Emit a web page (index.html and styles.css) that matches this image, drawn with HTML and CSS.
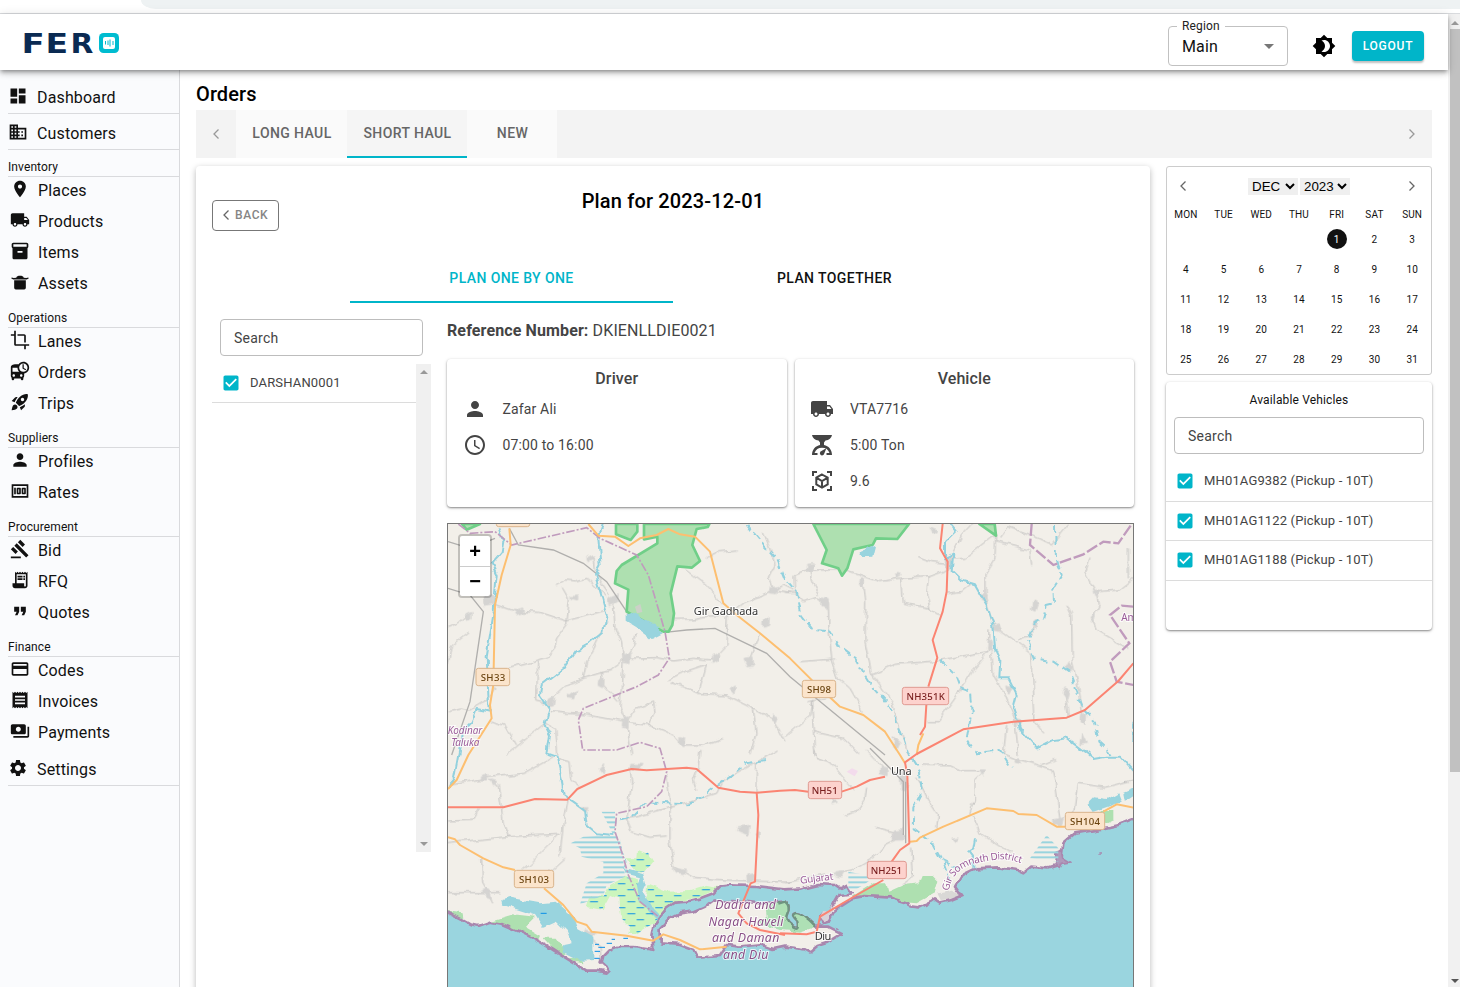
FILE: index.html
```html
<!DOCTYPE html>
<html lang="en">
<head>
<meta charset="utf-8">
<title>Fero - Orders</title>
<link rel="stylesheet" href="styles.css">
</head>
<body>
<svg class="defs" width="0" height="0">
  <symbol id="i-dash" viewBox="0 0 24 24"><path d="M3 13h8V3H3v10zm0 8h8v-6H3v6zm10 0h8V11h-8v10zm0-18v6h8V3h-8z"/></symbol>
  <symbol id="i-domain" viewBox="0 0 24 24"><path d="M12 7V3H2v18h20V7H12zM6 19H4v-2h2v2zm0-4H4v-2h2v2zm0-4H4V9h2v2zm0-4H4V5h2v2zm4 12H8v-2h2v2zm0-4H8v-2h2v2zm0-4H8V9h2v2zm0-4H8V5h2v2zm10 12h-8v-2h2v-2h-2v-2h2v-2h-2V9h8v10zm-2-8h-2v2h2v-2zm0 4h-2v2h2v-2z"/></symbol>
  <symbol id="i-place" viewBox="0 0 24 24"><path d="M12 2C8.13 2 5 5.13 5 9c0 5.25 7 13 7 13s7-7.75 7-13c0-3.87-3.13-7-7-7zm0 9.500c-1.380 0-2.500-1.120-2.500-2.500s1.120-2.500 2.500-2.500 2.500 1.120 2.500 2.500-1.120 2.500-2.500 2.500z"/></symbol>
  <symbol id="i-truck" viewBox="0 0 24 24"><path d="M20 8h-3V4H3c-1.100 0-2 .9-2 2v11h2c0 1.660 1.340 3 3 3s3-1.340 3-3h6c0 1.660 1.340 3 3 3s3-1.340 3-3h2v-5l-3-4zM6 18.500c-.83 0-1.500-.67-1.500-1.500s.67-1.500 1.500-1.500 1.500.67 1.500 1.500-.67 1.500-1.500 1.500zm13.500-9l1.960 2.500H17V9.500h2.500zm-1.500 9c-.83 0-1.500-.67-1.500-1.500s.67-1.500 1.500-1.500 1.500.67 1.500 1.500-.67 1.500-1.500 1.500z"/></symbol>
  <symbol id="i-box" viewBox="0 0 24 24"><path d="M20 2H4c-1 0-2 .9-2 2v3.010c0 .72.43 1.340 1 1.690V20c0 1.100 1.100 2 2 2h14c.9 0 2-.9 2-2V8.700c.57-.35 1-.97 1-1.690V4c0-1.100-1-2-2-2zm-5 12H9v-2h6v2zm5-7H4V4h16v3z"/></symbol>
  <symbol id="i-pot" viewBox="0 0 24 24"><path d="M5 10h14v9a2 2 0 0 1-2 2H7a2 2 0 0 1-2-2zM2 6.500l2.500 0.800 3-0.300C8 5.200 9.500 4.500 12 4.500s4 .7 4.500 2.500l3 .3 2.500-.8.400 1.300L20 9H4L1.600 7.800z"/></symbol>
  <symbol id="i-crop" viewBox="0 0 24 24"><path d="M17 15h2V7c0-1.100-.9-2-2-2H9v2h8v8zM7 17V1H5v4H1v2h4v10c0 1.100.9 2 2 2h10v4h2v-4h4v-2H7z"/></symbol>
  <symbol id="i-bus" viewBox="0 0 24 24"><path d="M16 1c-2.400 0-4.520 1.210-5.780 3.050.01-.01.01-.02.02-.03C9.840 4 9.420 4 9 4c-4.420 0-8 .5-8 4v10c0 .88.39 1.670 1 2.220V22c0 .55.45 1 1 1h1c.55 0 1-.45 1-1v-1h8v1c0 .55.45 1 1 1h1c.55 0 1-.45 1-1v-1.780c.61-.55 1-1.340 1-2.220v-3.080c3.390-.49 6-3.390 6-6.920 0-3.870-3.130-7-7-7zM4.500 19c-.83 0-1.500-.67-1.500-1.500S3.670 16 4.500 16s1.500.67 1.500 1.500S5.330 19 4.500 19zM3 13V8h6c0 1.960.81 3.730 2.110 5H3zm10.500 6c-.83 0-1.500-.67-1.500-1.500s.67-1.500 1.500-1.500 1.500.67 1.500 1.500-.67 1.500-1.500 1.500zm2.500-6c-2.760 0-5-2.240-5-5s2.240-5 5-5 5 2.240 5 5-2.240 5-5 5zm.5-9H15v5l3.620 2.160.75-1.230-2.870-1.680V4z"/></symbol>
  <symbol id="i-rocket" viewBox="0 0 24 24"><path d="M9.190 6.350c-2.040 2.290-3.440 5.580-3.570 5.890L2 10.690l4.050-4.050c.47-.47 1.150-.68 1.810-.55l1.330.26zM11.170 17s3.740-1.550 5.890-3.700c5.400-5.400 4.500-9.620 4.210-10.570-.95-.3-5.170-1.190-10.570 4.210C8.550 9.090 7 12.830 7 12.830L11.170 17zm6.480-2.190c-2.290 2.040-5.580 3.440-5.890 3.570L13.310 22l4.050-4.050c.47-.47.68-1.150.55-1.810l-.26-1.330zM9 18c0 .83-.34 1.580-.88 2.120C6.940 21.300 2 22 2 22s.7-4.940 1.880-6.120C4.420 15.340 5.170 15 6 15c1.660 0 3 1.340 3 3zm4-9c0-1.100.9-2 2-2s2 .9 2 2-.9 2-2 2-2-.9-2-2z"/></symbol>
  <symbol id="i-person" viewBox="0 0 24 24"><path d="M12 12c2.210 0 4-1.790 4-4s-1.790-4-4-4-4 1.790-4 4 1.790 4 4 4zm0 2c-2.670 0-8 1.340-8 4v2h16v-2c0-2.660-5.330-4-8-4z"/></symbol>
  <symbol id="i-money" viewBox="0 0 24 24"><path fill-rule="evenodd" d="M5 8h2v8H5zM9 8h3a1 1 0 0 1 1 1v6a1 1 0 0 1-1 1H9a1 1 0 0 1-1-1V9a1 1 0 0 1 1-1zm1 2v4h1v-4zM15 8h3a1 1 0 0 1 1 1v6a1 1 0 0 1-1 1h-3a1 1 0 0 1-1-1V9a1 1 0 0 1 1-1zm1 2v4h1v-4zM2 4v16h20V4H2zm2 14V6h16v12H4z"/></symbol>
  <symbol id="i-gavel" viewBox="0 0 24 24"><path d="M1 21h12v2H1v-2zM5.240 8.070l2.830-2.830 14.140 14.140-2.830 2.830L5.240 8.070zM12.320 1l5.660 5.660-2.830 2.830-5.660-5.660L12.320 1zM3.830 9.480l5.660 5.660-2.830 2.830L1 12.310l2.830-2.830z"/></symbol>
  <symbol id="i-rfq" viewBox="0 0 24 24"><path d="M19.500 3.500L18 2l-1.500 1.500L15 2l-1.500 1.500L12 2l-1.500 1.500L9 2 7.500 3.500 6 2v14H3v3c0 1.660 1.340 3 3 3h12c1.660 0 3-1.340 3-3V2l-1.500 1.500zM19 19c0 .55-.45 1-1 1s-1-.45-1-1v-3H8V5h11v14zM9 7h6v2H9zM16 7h2v2h-2zM9 10h6v2H9zM16 10h2v2h-2z"/></symbol>
  <symbol id="i-quote" viewBox="0 0 24 24"><path d="M6 17h3l2-4V7H5v6h3zm8 0h3l2-4V7h-6v6h3z"/></symbol>
  <symbol id="i-card" viewBox="0 0 24 24"><path d="M20 4H4c-1.110 0-1.990.89-1.990 2L2 18c0 1.110.89 2 2 2h16c1.110 0 2-.89 2-2V6c0-1.110-.89-2-2-2zm0 14H4v-6h16v6zm0-10H4V6h16v2z"/></symbol>
  <symbol id="i-receipt" viewBox="0 0 24 24"><path d="M18 17H6v-2h12v2zm0-4H6v-2h12v2zm0-4H6V7h12v2zM3 22l1.500-1.500L6 22l1.500-1.500L9 22l1.500-1.500L12 22l1.500-1.500L15 22l1.500-1.500L18 22l1.500-1.500L21 22V2l-1.500 1.500L18 2l-1.500 1.500L15 2l-1.500 1.500L12 2l-1.500 1.500L9 2 7.500 3.500 6 2 4.500 3.500 3 2v20z"/></symbol>
  <symbol id="i-pay" viewBox="0 0 24 24"><path d="M19 14V6c0-1.100-.9-2-2-2H3c-1.100 0-2 .9-2 2v8c0 1.100.9 2 2 2h14c1.100 0 2-.9 2-2zm-9-1c-1.660 0-3-1.340-3-3s1.340-3 3-3 3 1.340 3 3-1.340 3-3 3zm13-6v11c0 1.100-.9 2-2 2H4v-2h17V7h2z"/></symbol>
  <symbol id="i-gear" viewBox="0 0 24 24"><path d="M19.140 12.940c.04-.3.06-.61.06-.94 0-.32-.02-.64-.07-.94l2.030-1.580c.18-.14.23-.41.12-.61l-1.920-3.320c-.12-.22-.37-.29-.59-.22l-2.390.96c-.5-.38-1.030-.7-1.620-.94l-.36-2.540c-.04-.24-.24-.41-.48-.41h-3.840c-.24 0-.43.17-.47.41l-.36 2.540c-.59.24-1.130.57-1.620.94l-2.390-.96c-.22-.08-.47 0-.59.22L2.740 8.870c-.12.21-.08.47.12.61l2.030 1.580c-.05.3-.09.63-.09.94s.02.64.07.94l-2.030 1.580c-.18.14-.23.41-.12.61l1.920 3.320c.12.22.37.29.59.22l2.390-.96c.5.38 1.030.7 1.620.94l.36 2.540c.05.24.24.41.48.41h3.840c.24 0 .44-.17.47-.41l.36-2.540c.59-.24 1.130-.56 1.620-.94l2.390.96c.22.08.47 0 .59-.22l1.920-3.320c.12-.22.07-.47-.12-.61l-2.010-1.580zM12 15.600c-1.980 0-3.600-1.620-3.600-3.600s1.620-3.600 3.600-3.600 3.600 1.620 3.600 3.600-1.620 3.600-3.600 3.600z"/></symbol>
  <symbol id="i-theme" viewBox="0 0 24 24"><path d="M20 8.690V4h-4.690L12 .69 8.690 4H4v4.690L.69 12 4 15.310V20h4.690L12 23.310 15.310 20H20v-4.690L23.310 12 20 8.690zM12 18c-.89 0-1.740-.2-2.500-.55C11.560 16.500 13 14.420 13 12s-1.440-4.500-3.500-5.450C10.260 6.200 11.110 6 12 6c3.310 0 6 2.690 6 6s-2.690 6-6 6z"/></symbol>
  <symbol id="i-clock" viewBox="0 0 24 24"><path d="M11.990 2C6.470 2 2 6.480 2 12s4.470 10 9.990 10C17.520 22 22 17.520 22 12S17.520 2 11.990 2zM12 20c-4.420 0-8-3.580-8-8s3.580-8 8-8 8 3.580 8 8-3.580 8-8 8zm.5-13H11v6l5.250 3.150.75-1.230-4.500-2.670z"/></symbol>
  <symbol id="i-scale" viewBox="0 0 24 24"><path fill-rule="evenodd" d="M2 2h20c-.4 3-3 5-6.500 5.600L14 9.500v2.600C18.500 12.900 22 16.800 22 22h-5.500v-2h3a8 8 0 0 0-15 0h3v2H2c0-5.200 3.500-9.100 8-9.900V9.500L8.500 7.600C5 7 2.400 5 2 2zM16.500 15l-2.300 5.800a2.200 2.200 0 1 1-2.700-2.700z"/></symbol>
  <symbol id="i-cube" viewBox="0 0 24 24"><path fill="none" stroke="currentColor" stroke-width="2" d="M3 7V3h4M17 3h4v4M21 17v4h-4M7 21H3v-4M12 5.500l5.700 3.200v6.600L12 18.500l-5.700-3.200V8.700zM6.300 8.700l5.700 3.300 5.700-3.300M12 12v6.500"/></symbol>
  <symbol id="i-check" viewBox="0 0 24 24"><path d="M19 3H5c-1.110 0-2 .9-2 2v14c0 1.100.89 2 2 2h14c1.110 0 2-.9 2-2V5c0-1.100-.89-2-2-2zm-9 14l-5-5 1.410-1.410L10 14.170l7.590-7.590L19 8l-9 9z"/></symbol>
  <symbol id="i-left" viewBox="0 0 12 12"><path fill="none" stroke="currentColor" stroke-width="1.300" d="M8.500 1.500L4 6l4.500 4.500"/></symbol>
  <symbol id="i-right" viewBox="0 0 12 12"><path fill="none" stroke="currentColor" stroke-width="1.300" d="M3.500 1.500L8 6l-4.500 4.500"/></symbol>
  <symbol id="i-down" viewBox="0 0 10 8"><path fill="none" stroke="currentColor" stroke-width="2" d="M1 2l4 4 4-4"/></symbol>
</svg>

<div class="browser"><div class="omnibox"></div></div>
<div class="app">
  <div class="page">
    <header class="header">
      <svg class="logo" width="100" height="26" viewBox="0 0 100 26"><text class="logo-text" x="0" y="22.500" transform="translate(-.5 0) scale(1.280 1)">F</text><text class="logo-text" x="0" y="22.500" transform="translate(23.500 0) scale(1.250 1)">E</text><text class="logo-text" x="0" y="22.500" transform="translate(48.500 0) scale(1.120 1)">R</text><rect x="77" y="3" width="20" height="20" rx="4.500" fill="#00bcd0"/><rect x="81" y="7" width="12" height="12" rx="2" fill="#fff"/><path d="M83.500 11v3.500M86 10.500v4.500M88 9.500v7M91 11v4" stroke="#00bcd0" stroke-width="1"/></svg>
      <div class="actions">
        <div class="region"><span class="region-label">Region</span><span>Main</span><i class="caret"></i></div>
        <svg class="ic24 theme"><use href="#i-theme"/></svg>
        <div class="logout">LOGOUT</div>
      </div>
    </header>
    <div class="body">
      <nav class="sidebar">
        <div class="top-item"><svg><use href="#i-dash"/></svg>Dashboard</div>
        <div class="top-item"><svg><use href="#i-domain"/></svg>Customers</div>
        <div class="group">Inventory</div>
        <div class="item"><svg><use href="#i-place"/></svg>Places</div>
        <div class="item"><svg><use href="#i-truck"/></svg>Products</div>
        <div class="item"><svg><use href="#i-box"/></svg>Items</div>
        <div class="item"><svg><use href="#i-pot"/></svg>Assets</div>
        <div class="group">Operations</div>
        <div class="item"><svg><use href="#i-crop"/></svg>Lanes</div>
        <div class="item"><svg><use href="#i-bus"/></svg>Orders</div>
        <div class="item"><svg><use href="#i-rocket"/></svg>Trips</div>
        <div class="group">Suppliers</div>
        <div class="item"><svg><use href="#i-person"/></svg>Profiles</div>
        <div class="item"><svg><use href="#i-money"/></svg>Rates</div>
        <div class="group">Procurement</div>
        <div class="item"><svg><use href="#i-gavel"/></svg>Bid</div>
        <div class="item"><svg><use href="#i-rfq"/></svg>RFQ</div>
        <div class="item"><svg><use href="#i-quote"/></svg>Quotes</div>
        <div class="group">Finance</div>
        <div class="item"><svg><use href="#i-card"/></svg>Codes</div>
        <div class="item"><svg><use href="#i-receipt"/></svg>Invoices</div>
        <div class="item"><svg><use href="#i-pay"/></svg>Payments</div>
        <div class="top-item"><svg><use href="#i-gear"/></svg>Settings</div>
      </nav>
      <main class="main">
        <h1>Orders</h1>
        <div class="tabs">
          <div class="tab-arrow"><svg class="ic12"><use href="#i-left"/></svg></div>
          <div class="tab long">LONG HAUL</div><div class="tab short active">SHORT HAUL</div><div class="tab new">NEW</div>
          <div class="tab-arrow end"><svg class="ic12"><use href="#i-right"/></svg></div>
        </div>
        <div class="columns">
          <section class="plan">
            <div class="back"><svg class="ic12 dark"><use href="#i-left"/></svg>BACK</div>
            <h2>Plan for 2023-12-01</h2>
            <div class="modes"><div class="mode on">PLAN ONE BY ONE</div><div class="mode">PLAN TOGETHER</div></div>
            <div class="split">
              <div class="orders">
                <div class="search">Search</div>
                <div class="list">
                  <div class="rows"><div class="order"><svg><use href="#i-check"/></svg>DARSHAN0001</div></div>
                  <div class="list-bar"><i class="up"></i><i class="dn"></i></div>
                </div>
              </div>
              <div class="detail">
                <p class="ref"><b>Reference Number:</b> DKIENLLDIE0021</p>
                <div class="cards">
                  <div class="card"><h3>Driver</h3>
                    <div class="fact"><svg class="ic24"><use href="#i-person"/></svg>Zafar Ali</div>
                    <div class="fact"><svg class="ic24"><use href="#i-clock"/></svg>07:00 to 16:00</div></div>
                  <div class="card"><h3>Vehicle</h3>
                    <div class="fact"><svg class="ic24"><use href="#i-truck"/></svg>VTA7716</div>
                    <div class="fact"><svg class="ic24"><use href="#i-scale"/></svg>5:00 Ton</div>
                    <div class="fact"><svg class="ic24"><use href="#i-cube"/></svg>9.6</div></div>
                </div>
                <div class="map">
<svg class="map-svg" viewBox="24 27 2055 1389">
  <defs>
    <filter id="wobble" filterUnits="userSpaceOnUse" x="0" y="0" width="2100" height="1430" color-interpolation-filters="sRGB"><feTurbulence type="fractalNoise" baseFrequency=".03" numOctaves="2" seed="4"/><feDisplacementMap in="SourceGraphic" scale="20" xChannelSelector="R" yChannelSelector="G"/></filter>
    <pattern id="hatch" width="30" height="15" patternUnits="userSpaceOnUse"><path d="M0 7h30" stroke="#99d4de" stroke-width="6"/></pattern>
    <pattern id="marsh" width="56" height="36" patternUnits="userSpaceOnUse"><path d="M2 8h24M30 26h22" stroke="#0a8fe6" stroke-width="3"/></pattern>
    <path id="gsd" d="M1527 1128C1532 1085 1560 1052 1620 1042S1690 1026 1746 1046"/>
  </defs>
  <g filter="url(#wobble)">
  <!-- minor roads -->
  <g class="minor">
    <path d="M24 335L60 320 85 300M148 262L230 290 300 292 380 318 430 305 500 285M348 212L375 195 410 198 440 190 500 245M370 218L388 250 380 330 350 370 345 400 325 425 293 435 205 458M293 435L290 558 320 565M24 590L60 582 85 588 148 550 165 520M462 130L468 180 510 240M520 262L525 340 545 380 550 430 540 580 560 625 575 720M320 565L380 510 430 490 510 466 555 430 580 390 585 355M555 430L650 428 700 438 760 430 815 435M487 470L490 510 535 560M430 490L440 440 462 400 500 320M333 590L440 600 560 622 630 632 700 660 725 690 790 690 848 670M560 622L590 580 640 560 645 590 628 632M680 495L720 475 800 448 775 535 690 500M775 535L860 540 930 575 1000 615 1035 680M940 580L948 650 930 720M560 295L690 303M700 313L760 312 790 305 862 300 858 390 830 420M862 300L915 262 1000 225 1050 232M740 165L800 210 850 270M1000 225L985 190 1005 150 990 100 970 50M800 130L840 110 890 105M958 355L930 430M1000 225L1030 210 1060 225M150 618L195 630 230 690M200 720L320 620 345 650 350 720M24 450L35 390 85 350"/>
  </g>
  <g class="minor" transform="translate(1035 0)">
    <path d="M30 180L75 165 180 165 285 200 340 190 430 185 485 165M30 180L32 232 0 232M30 232L55 260 100 248 130 262 132 340 140 430 160 490 195 520 235 590M75 165L80 200 100 240M235 190L242 260 240 380 260 480 320 560 370 720M350 190L355 265 430 278 465 300M430 185L425 240 435 280M400 125L440 140 485 145M560 27L530 60 505 110M485 235L530 230 560 205M632 60L630 130 600 180 600 240 620 320 650 350 740 415 750 620 780 655M632 60L540 130 485 133M645 70L670 35 740 60 800 90 850 27M632 80L735 105 740 150M700 375L740 360 748 325M45 440L150 432M260 480L330 448 450 438 610 410M612 340L610 410 560 470 510 550 460 620 425 620M620 410L625 480 660 540 690 610 700 720M845 270L860 300 862 440 885 540 893 600M915 128L902 170 935 230 1000 225 1045 190M935 230L940 270 920 310 935 345 1030 400M850 600L840 530M80 555L75 600 0 665M80 555L85 650 175 670 225 720M65 560L120 550M85 650L90 720M665 630L655 720M1030 100L1030 190"/>
  </g>
  <g class="minor" transform="translate(0 705)">
    <path d="M24 103L130 87 160 80 250 70 340 20M150 90L175 105 190 220 205 260 360 253M24 278L205 260M355 253L270 340 245 360M375 325L325 370M24 210L100 208 118 175M125 325L128 400 145 430 155 460M24 428L180 428M385 150L370 220 360 320M350 25L390 35 395 90 420 110M570 50L575 100 560 210 575 245 630 262 680 258M680 70L690 160 690 270 700 350 760 382 850 390 1050 397M555 210L690 172 830 130 850 90 950 35 1010 0M950 35L948 130M780 0L775 50 760 90 770 120M440 555L480 590 485 640"/>
  </g>
  <g class="minor" transform="translate(1035 705)">
    <path d="M90 0L95 25 140 40 205 120M245 110L240 150 215 185 180 195M270 232L360 255M395 80L430 150 460 195 455 235M410 45L500 48 530 62 600 62 570 90 568 150 550 200M565 200L580 245 650 290 680 310M360 255L300 285 285 310 200 360 0 398M380 290L385 380 350 405M650 10L700 30 800 60 810 95 825 210 870 180 880 100 960 112 1045 90M770 45L810 28M240 0L290 50"/>
  </g>
  <!-- settlements -->
  <g class="town">
    <path d="M130 248l30-4-2 26-26 4zM225 285l20-6 4 14-20 6zM80 300l16-8v20l-16 4zM440 130l18-8 4 12-18 6zM395 245l18-2v12l-16-4zM505 250l30-14-2 24-26 12zM548 420l24-8-2 34-20-4zM478 500l14-8-2 26-12-6zM380 548l30-22-6 26zM325 555l16-6-4 24-14 2zM552 612l12-4v28l-14-2zM815 425l24-8-2 20-24 8zM912 430l24-4 2 30-14 2zM968 325l20-20-2 26-16 6zM990 218l24-4-4 22-22-2zM870 520l16-10-4 24zM720 665l14 4-2 26-14-6zM1000 600l16 6-8 20-16-12zM1100 145l22-2-8 24-16 0zM1145 245l20 6-2 30-18-10zM1260 185l14 12-4 14-14-8zM1370 175l14 4-12 8zM1470 40l20 8-12 10zM1515 125l24-4-6 40-12 4zM1660 335l14-6 6 20-18-4zM1645 380l12-2v28l-14-4zM1625 235l14 4-6 20-10-6zM1780 255l16 10-8 24-14-8zM1775 330l14-12-4 26zM1962 225l12 6-6 12zM1950 310l12-12-4 26zM1885 440l14 22-12 10-12-14zM1875 515l12 10-6 24-12-14zM1925 600l12-4-2 30-12-8zM1925 655l14 30-20 4zM1360 665l20 20-8 20-14-10zM1730 615l14 2-6 14-12-4zM1700 510l18 6-12 22zM1380 775l24 0-6 50-14-4zM1320 755l24 4v20l-24-6z"/>
    <path d="M125 785l22-6-4 16-20 0zM155 795l14 4-6 14zM480 760l14-14-4 28zM575 745l34 0-8 14-26 0zM420 875l24 0-6 16zM895 935l36-4-4 30-34-14zM945 955l12-6v20zM700 1060l40 6-14 10-22-6zM920 1080l26-4-2 22-22 0zM130 1125l16 0 4 24-12-4zM435 1245l30 6-14 14-20-4zM1185 1070l30-4-12 20-18-4zM1360 945l30-4v34h-30zM1535 970l22-4-12 14zM1840 915l30-6-6 24-20-4zM1725 735l12-4 8 18-20-4zM1620 765l16 0-6 18zM1185 855l10 10-16 4z"/>
  </g>
  </g>
  <g class="rail">
    <path d="M24 80L90 100 165 70M208 40L235 90 340 105 430 145 500 200 560 290 675 352 740 345 825 340 980 415 1050 485 1335 720M24 220L90 240 130 290 90 560 35 720M1290 700L1390 800V960M1397 800V985"/>
  </g>
  <path d="M1220 770l16-10 18 8-10 16z" fill="#f3dbec"/>
  <!-- forests -->
  <g class="forest">
    <path d="M66 27H120L80 44zM528 27H592V50L572 75 528 58zM612 27H808L803 36 770 42 757 90 780 138 755 158 712 154 692 235 702 295 697 330 686 350H670L560 290 565 224 525 205 530 168 545 150 652 85V65L612 73z"/>
    <path d="M1120 27H1407L1372 72 1308 70 1298 90 1240 103 1222 160 1206 182 1195 160 1146 145 1160 105zM1618 27H1664L1668 62z"/>
  </g>
  <path d="M585 275l16-8 6 24-16 4z" fill="#ccd1c8"/>
  <g filter="url(#wobble)">
  <g class="water"><path d="M560 298L575 290 640 325 668 355 635 372 600 345 560 320zM1258 110L1285 100 1308 92 1300 125 1270 127z"/></g>
  <!-- coast -->
  <path class="marsh-bg" d="M597 1003L625 1015 640 1040 615 1070 585 1068 555 1030 595 1030zM555 1085L590 1095 600 1150 660 1205 640 1225 585 1260H565L570 1235 540 1205 535 1150 510 1140 485 1185 440 1175 450 1145 490 1145 510 1110zM625 1110L680 1130 750 1128 800 1112 838 1120 780 1145 710 1160 660 1205 645 1190 620 1150z"/>
  <g class="green"><path d="M24 1188L68 1195 70 1208 50 1212zM145 1220L220 1198 285 1205 255 1235 300 1262 290 1285 180 1228zM310 1268L350 1268 380 1310 360 1325zM370 1335L425 1320 430 1345zM1235 1145L1300 1105H1338L1345 1130 1390 1110 1435 1105 1445 1080 1475 1080 1495 1100 1485 1135 1430 1165 1395 1162 1340 1145zM1900 960L1990 930 1985 885 2020 885V915L1970 940z"/></g>
  <path class="town-fill" d="M1495 1135l40-8 30 14-20 10-40 4z"/>
  <g class="water"><path d="M187 1155L210 1148 300 1165 350 1160 400 1205 412 1240 460 1265V1335L420 1338 365 1310 370 1290 395 1285 380 1250 350 1220 310 1238 285 1200 190 1170zM540 968L560 1060 610 1075 620 1110 610 1130 640 1180 665 1205 650 1215 600 1160 590 1110 600 1090 560 1080zM1945 870L1965 850 2000 855 2035 835 2045 860 1990 880 1960 890zM2050 835L2085 820V840L2055 860z"/></g>
  <path class="sea" d="M10 1190L24 1193 60 1210 90 1227 115 1233 150 1220 180 1225 215 1240 250 1255 300 1280 340 1305 400 1343 440 1367 470 1367 500 1373 508 1365 485 1345 490 1325 510 1305 540 1293 580 1293 640 1302 637 1265 645 1225 660 1205 680 1180 705 1163 740 1160 780 1150 820 1135 840 1115 870 1111 950 1113 1035 1123 1085 1120 1135 1107 1185 1110 1200 1120 1220 1110 1235 1135 1200 1140 1180 1175 1140 1205 1150 1225 1165 1220 1180 1190 1205 1170 1235 1150 1275 1143 1345 1147 1405 1165 1410 1177 1435 1180 1475 1160 1485 1153 1500 1163 1535 1155 1565 1143 1545 1115 1565 1080 1605 1060 1675 1057 1735 1065 1750 1072 1770 1055 1825 1060 1855 1050 1865 1025 1870 985 1905 955 1975 943 2035 930 2090 908V1480H10z"/>
  <path class="island" d="M662 1285V1240L690 1210 720 1195 760 1190 795 1175 820 1157 880 1155 960 1165 1035 1160Q1053 1175 1042 1195T1055 1232 1072 1220Q1050 1200 1065 1195T1125 1235L1165 1235 1205 1255 1165 1280 1135 1290 1110 1312 1095 1303 1035 1295 1000 1302 960 1288 900 1295 860 1290 840 1320 770 1325 760 1305 720 1290z"/>
  <path class="lagoon" d="M975 1165L1035 1160Q1053 1175 1042 1195T1055 1232 1072 1220Q1050 1200 1065 1195T1125 1235L1080 1250 1020 1245 950 1225 980 1205z"/>
  <path class="lagoon-edge" d="M1015 1166L1035 1160Q1053 1175 1042 1195T1055 1232 1072 1220Q1050 1200 1065 1195T1125 1235"/>
  <path class="coast" d="M1848 1015l16-6 4 20 20 12-24 4-6 12-14-8zM1975 1014h8M1188 1238l8 2"/>
  <path class="peninsula" d="M1150 1190L1180 1172 1165 1215 1152 1222 1140 1206z"/>
  </g>
  <path class="hatch" d="M485 890H525V950L545 990 555 1085 500 1110 490 1142 420 1168 440 1105 490 1075 490 1040 425 1025 420 1000 392 985 430 965 520 960zM1225 1070L1305 1085 1270 1110 1240 1128 1225 1125zM1820 960L1855 1000V1040L1770 1030z"/>
  <path class="marsh" d="M597 1003L625 1015 640 1040 615 1070 585 1068 555 1030 595 1030zM555 1085L590 1095 600 1150 660 1205 640 1225 585 1260H565L570 1235 540 1205 535 1150 510 1140 485 1185 440 1175 450 1145 490 1145 510 1110zM625 1110L680 1130 750 1128 800 1112 838 1120 780 1145 710 1160 660 1205 645 1190 620 1150z"/>
  <path class="marsh-dash" d="M302 1195h18M465 1288h12M475 1297h20M500 1285h16M464 1309h16M463 1330h16M515 1273h10M550 1270h14"/>
  <!-- rivers -->
  <g filter="url(#wobble)">
  <g class="river">
    <path d="M175 40L190 80 185 110 155 145 170 180 160 300 140 420 145 540 150 590 110 582 95 620 70 645 58 720 45 790 24 815"/>
    <path d="M488 27L475 70 482 150 465 180 480 230 500 300 490 350 440 390 405 410 370 460 305 510 300 540 328 580 315 630 330 660 322 715 350 725 365 790 370 840 400 860 435 885 440 930 470 955 520 960"/>
    <path d="M1535 27L1550 45 1515 80 1515 130 1540 115 1535 170 1560 195 1605 208 1640 270 1660 330 1665 400 1678 430 1675 490 1705 490 1730 540 1720 580 1740 640 1790 700 1840 675 1880 670 1940 715 1960 732 2000 725 2040 725 2080 770"/>
    <path d="M1605 970L1600 1000 1585 1010 1600 1030 1600 1060"/>
  </g>
  <g class="river dashed">
    <path d="M920 27L970 90 1010 130 1035 190 1070 230 1085 300 1120 345 1175 350 1200 395 1245 430 1300 520 1345 570 1380 640 1405 715 1440 770 1445 830 1420 880 1418 940 1480 985 1510 1040 1535 1110"/>
    <path d="M1500 435L1545 480 1560 520 1590 530 1595 590 1580 670 1610 715 1680 705 1715 760"/>
    <path d="M1845 30L1848 130 1865 180 1840 220 1842 265 1820 270 1810 310 1780 330 1765 380 1785 430 1840 440 1890 475 1930 580 1965 620 1975 680 2015 717M2080 620V690"/>
    <path d="M975 735L920 745 880 775 840 805 790 845 740 868 620 862 580 905 530 920M1505 1035L1570 1065"/>
  </g>
  </g>
  <!-- administrative borders -->
  <path class="border" d="M55 27L90 55 165 50 215 90 440 38 480 70 590 120 625 180 675 350 688 430 655 480 590 515 430 580 415 615 428 705 530 705 600 682 660 700 680 770 665 830 620 875 530 895 525 950 545 1010 565 1080 600 1160 655 1205"/>
  <path class="border wide" d="M1775 27L1770 90 1840 150 1930 118 1990 80 2035 85 2080 20M2080 275L2045 272 2010 300 2068 385 2010 440 2030 500 2080 510"/>
  <!-- highways -->
  <g class="state">
    <path d="M208 40L212 90 185 180 165 270 160 510 150 570 155 610 85 720 50 795 24 822M445 27L475 62 525 65 565 93 600 70 650 60 685 42 720 58 765 65 810 110 850 265 890 300 960 355 1050 430 1120 500 1200 575 1270 600 1335 650 1380 720 1395 745M1430 720L1435 690 1450 655M24 967L45 973 60 990 130 1030 190 1057 225 1065M312 1120L370 1170 410 1220 440 1230 455 1250 560 1262 640 1277 670 1258 720 1275 780 1303 860 1295M1410 980L1430 978 1440 968 1510 935 1640 880 1720 888 1735 897 1790 900 1850 935 1880 935M1990 890L2030 868 2080 878"/>
  </g>
  <g class="national">
    <path d="M1508 27L1500 100 1523 140 1520 230 1508 290 1478 375 1492 428 1465 515M1459 570L1455 635 1440 660M1430 717L1570 643 1720 620 1820 613 1880 608 1935 585 2035 498 2080 445M1430 717L1395 742 1402 780 1408 985 1380 1005 1355 1040M1330 1095L1250 1140 1140 1205 1130 1250 1100 1258 1020 1255M24 877L190 877 285 852 382 854 412 822 500 780 575 762 620 766 740 758 770 762 835 818 900 830 950 833 1020 827 1065 825 1105 830M1205 830L1250 815 1290 795 1335 785M950 833L955 900 945 1100 932 1105 895 1195 920 1225 960 1245 1035 1260"/>
  </g>
  <!-- road shields -->
  <g class="shield orange">
    <rect x="108" y="460" width="101" height="52" rx="7"/><text x="159" y="499" textLength="74">SH33</text>
    <rect x="169" y="-17" width="100" height="52" rx="7"/>
    <rect x="1087" y="496" width="100" height="52" rx="7"/><text x="1137" y="534" textLength="72">SH98</text>
    <rect x="223" y="1066" width="118" height="52" rx="7"/><text x="282" y="1104" textLength="90">SH103</text>
    <rect x="1876" y="892" width="118" height="52" rx="7"/><text x="1935" y="930" textLength="90">SH104</text>
  </g>
  <g class="shield red">
    <rect x="1387" y="517" width="139" height="52" rx="7"/><text x="1457" y="555" textLength="115">NH351K</text>
    <rect x="1105" y="799" width="100" height="52" rx="7"/><text x="1154" y="838" textLength="78">NH51</text>
    <rect x="1282" y="1039" width="117" height="52" rx="7"/><text x="1339" y="1077" textLength="94">NH251</text>
  </g>
  <g class="place">
    <text x="858" y="300" textLength="193">Gir Gadhada</text>
    <text x="1384" y="779" textLength="62">Una</text>
    <text x="1149" y="1275" textLength="50">Diu</text>
  </g>
  <g class="region-name">
    <text x="75" y="657" textLength="104">Kodinar</text><text x="76" y="692" textLength="84">Taluka</text>
    <text class="big" x="917" y="1182" textLength="182">Dadra and</text><text class="big" x="918" y="1232" textLength="225">Nagar Haveli</text><text class="big" x="917" y="1281" textLength="202">and Daman</text><text class="big" x="917" y="1331" textLength="136">and Diu</text>
    <text class="up" x="2067" y="319">Am</text>
    <text class="up" transform="translate(1131 1100) rotate(-7)" textLength="100">Gujarat</text>
    <text class="curve"><textPath href="#gsd" textLength="262">Gir Somnath District</textPath></text>
  </g>
</svg>
                  <div class="zoom"><span>+</span><span>−</span></div>
                </div>
              </div>
            </div>
          </section>
          <aside class="side">
            <div class="calendar">
              <div class="cal-head"><svg class="ic12 dark"><use href="#i-left"/></svg><div class="selects"><span class="sel">DEC<svg><use href="#i-down"/></svg></span><span class="sel">2023<svg><use href="#i-down"/></svg></span></div><svg class="ic12 dark"><use href="#i-right"/></svg></div>
              <div class="week"><span>MON</span><span>TUE</span><span>WED</span><span>THU</span><span>FRI</span><span>SAT</span><span>SUN</span></div>
              <div class="days"><span></span><span></span><span></span><span></span><span><b>1</b></span><span>2</span><span>3</span><span>4</span><span>5</span><span>6</span><span>7</span><span>8</span><span>9</span><span>10</span><span>11</span><span>12</span><span>13</span><span>14</span><span>15</span><span>16</span><span>17</span><span>18</span><span>19</span><span>20</span><span>21</span><span>22</span><span>23</span><span>24</span><span>25</span><span>26</span><span>27</span><span>28</span><span>29</span><span>30</span><span>31</span></div>
            </div>
            <div class="vehicles">
              <h4>Available Vehicles</h4>
              <div class="search">Search</div>
              <div class="vehicle"><svg><use href="#i-check"/></svg>MH01AG9382 (Pickup - 10T)</div>
              <div class="vehicle"><svg><use href="#i-check"/></svg>MH01AG1122 (Pickup - 10T)</div>
              <div class="vehicle"><svg><use href="#i-check"/></svg>MH01AG1188 (Pickup - 10T)</div>
            </div>
          </aside>
        </div>
      </main>
    </div>
  </div>
  <div class="page-bar"><i class="up"></i><div class="thumb"></div><i class="dn"></i></div>
</div>
</body>
</html>
```
FILE: styles.css
```css
* { box-sizing: border-box; }
body { margin: 0; height: 987px; overflow: hidden; font-family: Roboto, sans-serif; font-size: 16px; color: #111; background: #fff; }
h1, h2, h3, h4, p { margin: 0; font-weight: 500; }
svg { fill: currentColor; flex: none; }
.defs { display: none; }
.ic24 { width: 24px; height: 24px; }
.ic12 { width: 12px; height: 12px; color: #999; }

.browser { height: 14px; border-bottom: 1px solid #d9dbde; }
.omnibox { height: 9px; margin-left: 141px; background: #eef2f3; border-bottom-left-radius: 15px 9px; }
.app { display: flex; height: 973px; }
.page { width: 1448px; height: 973px; display: flex; flex-direction: column; }
.header { position: relative; z-index: 2; flex: none; height: 56px; background: #fff; display: flex; justify-content: space-between; padding: 0 24px 0 22px; box-shadow: 0 2px 4px -1px rgba(0,0,0,.35), 0 4px 5px rgba(0,0,0,.14), 0 1px 10px rgba(0,0,0,.12); }
.logo { margin-top: 16px; overflow: visible; }
.logo-text { font: bold 26.500px "DejaVu Sans", sans-serif; fill: #0a2a52; }
.actions { display: flex; }
.region { position: relative; width: 120px; height: 40px; margin-top: 12px; border: 1px solid #c1c1c1; border-radius: 4px; padding: 0 13px; display: flex; align-items: center; justify-content: space-between; letter-spacing: .15px; }
.region-label { position: absolute; left: 8px; top: -8px; padding: 0 5px; background: #fff; font-size: 12px; line-height: 14px; color: #222; }
.caret { border: 5px solid transparent; border-top-color: #777; border-bottom: 0; }
.theme { margin: 20px 16px 0 24px; color: #000; }
.logout { width: 72px; height: 30px; margin-top: 17px; border-radius: 4px; background: #00b5c9; color: #fff; font-size: 12px; font-weight: 500; letter-spacing: .75px; line-height: 30px; text-align: center; box-shadow: 0 2px 2px rgba(0,0,0,.25); }

.body { display: flex; flex: 1; min-height: 0; }
.sidebar { width: 180px; padding: 8px 0 0 8px; background: #fafbfd; border-right: 1px solid #d9dadd; letter-spacing: .15px; }
.sidebar svg { width: 20px; height: 20px; }
.top-item { height: 36px; display: flex; align-items: center; gap: 9px; padding-top: 3px; border-bottom: 1px solid #d9dadd; }
.top-item svg { margin-top: -2px; }
.item { height: 27px; margin-bottom: 4px; display: flex; align-items: center; gap: 8px; padding-left: 2px; }
.item svg { margin-top: -4px; }
.group { height: 27px; border-bottom: 1px solid #d9dadd; padding-top: 10px; font-size: 12px; line-height: 14px; letter-spacing: .1px; }

.main { flex: 1; padding: 10px 16px 0; display: flex; flex-direction: column; min-height: 0; }
.main h1 { flex: none; height: 30px; font-size: 20px; line-height: 28px; color: #000; letter-spacing: .1px; }
.tabs { flex: none; display: flex; height: 48px; background: #f3f3f3; }
.tab-arrow { width: 40px; display: flex; align-items: center; justify-content: center; }
.tab-arrow.end { margin-left: auto; }
.tab { background: #fafafa; color: #666; font-size: 14px; font-weight: 500; letter-spacing: .4px; line-height: 46px; text-align: center; border-bottom: 2px solid transparent; padding-left: 1px; }
.long { width: 111px; }
.short { width: 120px; }
.new { width: 90px; }
.tab.active { background: #f5f5f5; border-color: #00b5c9; }
.columns { display: flex; gap: 16px; margin-top: 8px; flex: 1; min-height: 0; }
.plan { position: relative; width: 954px; height: 860px; padding: 16px; background: #fff; border-radius: 4px; box-shadow: 0 2px 6px rgba(0,0,0,.28); }
.back { position: absolute; left: 16px; top: 34px; width: 67px; height: 31px; border: 1px solid #777; border-radius: 4px; display: flex; align-items: center; gap: 3px; padding: 0 0 1px 7px; font-size: 12px; font-weight: 500; letter-spacing: .6px; color: #858585; }
.plan h2 { height: 71px; font-size: 20px; line-height: 38px; text-align: center; color: #000; letter-spacing: .15px; }
.modes { display: flex; width: 646px; margin: 0 auto; height: 50px; }
.mode { flex: 1; text-align: center; font-size: 14px; font-weight: 500; line-height: 50px; letter-spacing: .4px; }
.mode.on { color: #00b5c9; border-bottom: 2px solid #00b5c9; }
.split { display: flex; gap: 16px; padding-top: 16px; }
.orders { width: 219px; }
.search { height: 37px; border: 1px solid #bdbdbd; border-radius: 4px; padding-left: 13px; font-size: 14px; line-height: 36px; letter-spacing: .25px; color: #444; }
.orders .search { width: 203px; margin-left: 8px; }
.list { display: flex; height: 488px; margin-top: 8px; }
.rows { flex: 1; }
.order, .vehicle { display: flex; align-items: center; border-bottom: 1px solid #dcdcdc; font-size: 13px; letter-spacing: .15px; color: #444; padding-bottom: 1px; }
.order svg, .vehicle svg { width: 20px; height: 20px; margin: 1px 9px 0; color: #00b5c9; }
.order { height: 39px; }
.list-bar { width: 15px; background: #f0f0f0; display: flex; flex-direction: column; align-items: center; justify-content: space-between; padding: 6px 0; }
.up, .dn { border: 4px solid transparent; }
.up { border-top: 0; border-bottom-color: #999; }
.dn { border-bottom: 0; border-top-color: #999; }
.detail { width: 687px; }
.ref { height: 40px; line-height: 23px; font-weight: 400; color: #444; letter-spacing: .12px; }
.ref b { font-weight: 700; }
.cards { display: flex; gap: 8px; }
.card { flex: 1; height: 148px; border-radius: 4px; box-shadow: 0 1px 2px rgba(0,0,0,.4), 0 1px 4px rgba(0,0,0,.12); color: #444; }
.card h3 { height: 32px; text-align: center; font-size: 16px; line-height: 40px; letter-spacing: .1px; }
.fact { display: flex; align-items: center; gap: 16px; height: 36px; padding-left: 15.500px; font-size: 14px; letter-spacing: .15px; }
.map { position: relative; height: 480px; margin-top: 16px; border: 1px solid #777; background: #f2efe9; overflow: hidden; }
.map-svg { display: block; width: 685px; height: 463px; fill: #000; }
.zoom { position: absolute; left: 12px; top: 12px; width: 30px; height: 60px; background: #fff; border-radius: 2px; box-shadow: 0 0 0 2px rgba(0,0,0,.2); display: flex; flex-direction: column; }
.zoom span { height: 30px; text-align: center; font: bold 20px/30px "Liberation Sans", sans-serif; color: #000; }
.zoom span + span { border-top: 1px solid #ccc; line-height: 28px; }

.minor path { fill: none; stroke: #c3c2c1; stroke-width: 3; stroke-linejoin: round; }
.rail path { fill: none; stroke: #b0afad; stroke-width: 4; }
.town path { fill: #d5d4d2; stroke: #d5d4d2; stroke-width: 3; }
.town-fill { fill: #d9d8d6; }
.forest path { fill: #aee0b0; stroke: #70cf88; stroke-width: 8; stroke-linejoin: round; }
.water path { fill: #99d4de; }
.green path { fill: #aee0b0; }
.hatch { fill: url(#hatch); }
.marsh-bg { fill: #ccf5bd; }
.marsh { fill: url(#marsh); }
.marsh-dash { stroke: #0a8fe6; stroke-width: 3; }
.sea { fill: #9ad5df; stroke: #a987ae; stroke-width: 8; stroke-linejoin: round; }
.island { fill: #f2efe9; stroke: #a987ae; stroke-width: 8; stroke-linejoin: round; }
.lagoon { fill: #aee0b5; }
.lagoon-edge { fill: none; stroke: #6f9481; stroke-width: 7; }
.peninsula { fill: #d9d3d9; }
.coast { fill: #b09abb; stroke: #a987ae; stroke-width: 5; }
.river path { fill: none; stroke: #92d1de; stroke-width: 6; stroke-linejoin: round; }
.dashed path { stroke-dasharray: 24 12; }
.border { fill: none; stroke: #c09bbd; stroke-width: 5; stroke-dasharray: 26 6 6 6; }
.wide { stroke-width: 7; stroke-dasharray: 36 8; }
.state path { fill: none; stroke: #fdbf70; stroke-width: 6; stroke-linejoin: round; }
.national path { fill: none; stroke: #fb8472; stroke-width: 6; stroke-linejoin: round; }
.shield rect { stroke-width: 3; }
.shield text { font: 500 29px "Noto Sans", sans-serif; text-anchor: middle; }
.orange rect { fill: #fbe4cb; stroke: #d9b48c; }
.orange text { fill: #6b4410; }
.red rect { fill: #fdd2cd; stroke: #df9a92; }
.red text { fill: #7a1f1f; }
.place text { font: 33px "Noto Sans", sans-serif; fill: #333; text-anchor: middle; paint-order: stroke; stroke: #fff; stroke-opacity: .8; stroke-width: 6; }
.region-name text { font: italic 30px "Noto Sans", sans-serif; fill: #9a5c99; text-anchor: middle; paint-order: stroke; stroke: #fff; stroke-opacity: .75; stroke-width: 6; }
.region-name .big { font-size: 37px; fill: #8a5088; }
.region-name .up { font-style: normal; }
.region-name .curve { font-style: normal; text-anchor: start; }

.side { width: 266px; }
.calendar { height: 209px; border: 1px solid #ccc; border-radius: 3px; }
.cal-head { display: flex; justify-content: space-between; align-items: center; height: 38px; padding: 0 13px 0 10px; }
.dark { color: #666; }
.selects { display: flex; gap: 2px; margin-left: 3px; }
.sel { width: 50px; height: 17px; background: #efefef; display: flex; align-items: center; justify-content: space-between; padding: 0 3px 0 4px; font: 13.333px "Liberation Sans", sans-serif; color: #000; }
.sel svg { width: 10px; height: 8px; }
.week, .days { display: grid; grid-template-columns: repeat(7, 1fr); text-align: center; font-size: 10px; letter-spacing: .1px; }
.week { height: 19px; line-height: 19px; }
.days { grid-auto-rows: 30px; line-height: 32px; }
.days b { display: block; width: 20px; height: 20px; margin: 5px auto; border-radius: 50%; background: #111; color: #fff; font-weight: 400; line-height: 21px; }
.vehicles { height: 248px; margin-top: 7px; border-radius: 4px; box-shadow: 0 1px 2px rgba(0,0,0,.4), 0 1px 4px rgba(0,0,0,.12); }
.vehicles h4 { height: 35px; line-height: 36px; text-align: center; font-size: 12px; font-weight: 400; letter-spacing: .15px; }
.vehicles .search { margin: 0 8px 8px; }
.vehicle { height: 39.500px; }
.page-bar { width: 12px; background: #f1f1f1; padding: 7px 0 4px 2px; display: flex; flex-direction: column; }
.page-bar .up, .page-bar .dn { align-self: center; }
.page-bar .dn { margin-top: auto; border-top-color: #555; }
.thumb { height: 743px; margin-top: 4px; background: #c1c1c1; }
```
